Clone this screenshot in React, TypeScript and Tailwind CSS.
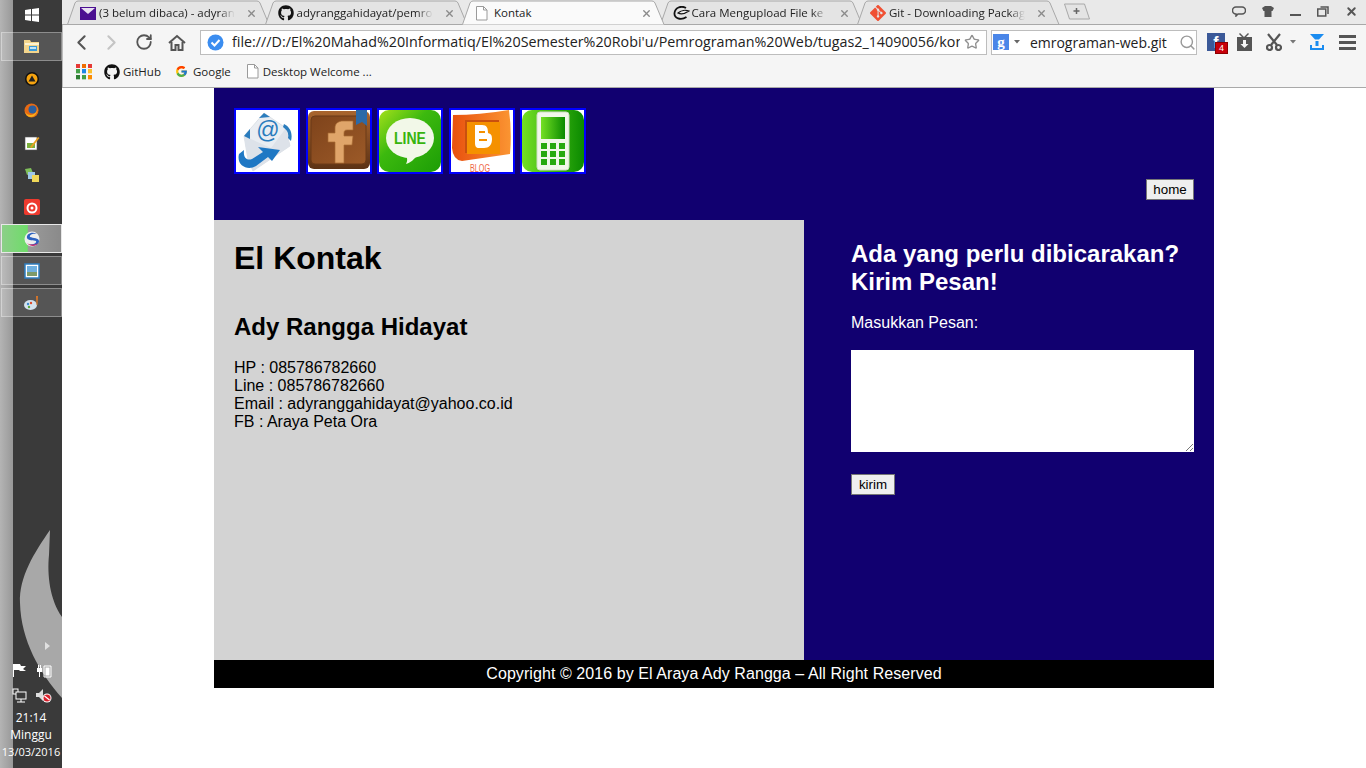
import { ChevronLeft, ChevronRight, RotateCw, Search, Star, X } from "lucide-react";
import { FaGithub } from "react-icons/fa";
import { FcGoogle } from "react-icons/fc";
import { SiGit } from "react-icons/si";
import type { ReactNode } from "react";

const uiFont = "font-['Open_Sans','Noto_Sans',sans-serif]";

function DocIcon() {
  return (
    <svg width="13" height="15" viewBox="0 0 13 15" fill="none" stroke="#9a9a9a" strokeWidth="1">
      <path d="M1.5.5h7l3.500 3.500v10h-10.500z" fill="#fff" />
      <path d="M8.500.5v3.500h3.500" />
    </svg>
  );
}

function MailIcon() {
  return (
    <svg width="16" height="13" viewBox="0 0 16 13">
      <rect width="16" height="13" fill="#4b0f91" />
      <path d="M1 1h14l-7 6z" fill="#e8e0f2" />
    </svg>
  );
}

function SwirlIcon() {
  return (
    <svg width="17" height="15" viewBox="0 0 17 15" fill="none" stroke="#111" strokeWidth="1.800">
      <path d="M13 2C8-1 2 2 1.500 7c-.5 5 6 8 12 4" />
      <path d="M5 7c3-3 8-3 11-2-3 2-7 4-11 2z" fill="#eee" strokeWidth="1.200" />
    </svg>
  );
}

function Tab({ icon, title, active }: { icon: ReactNode; title: string; active?: boolean }) {
  return (
    <div className={`relative h-[24px] w-[197.500px] shrink-0 ${active ? "z-10" : ""}`}>
      <svg className="absolute left-0 top-0" width="204" height="25" viewBox="0 0 204 25">
        <path
          d={`M.5 24.500 8 3Q9 1 11 1H190Q192 1 193 3L202 24.500${active ? "" : "Z"}`}
          fill={active ? "#fafafa" : "#e4e4e4"}
          stroke="#a8a8a8"
        />
      </svg>
      <div className="relative flex h-full items-center pl-[13px] pt-[2px]">
        <span className="flex w-[19px] shrink-0 items-center">{icon}</span>
        <span
          className={`w-[136px] overflow-hidden whitespace-nowrap text-[11.500px] text-[#222] ${uiFont} ${
            active ? "" : "[mask-image:linear-gradient(90deg,#000_88%,transparent)]"
          }`}
        >
          {title}
        </span>
        <X className="ml-[11px] shrink-0 text-[#8a8a8a]" size={11} strokeWidth={3} />
      </div>
    </div>
  );
}

function HomeIcon() {
  return (
    <svg width="18" height="17" viewBox="0 0 18 17" fill="none" stroke="#555" strokeWidth="2">
      <path d="M1 9l8-7 8 7" />
      <path d="M3.500 8v8h4v-5h3v5h4V8" />
    </svg>
  );
}

function AppsGrid() {
  const colors = ["#e53935", "#ef6c00", "#e53935", "#43a047", "#1e88e5", "#fbc02d", "#2e7d32", "#43a047", "#fb8c00"];
  return (
    <div className="grid h-[16px] w-[16px] grid-cols-3 gap-[1.500px]">
      {colors.map((c, i) => (
        <svg key={i} viewBox="0 0 4 4" className="h-full w-full">
          <rect width="4" height="4" fill={c} />
        </svg>
      ))}
    </div>
  );
}

function ChromeBar() {
  return (
    <div className="h-[88px] shrink-0 border-b border-[#a9a9a9] bg-[#f5f5f5]">
      {/* tab strip */}
      <div className="relative flex h-[25px] border-b border-[#a8a8a8] bg-[#e9e9e9] pl-[5px]">
        <Tab icon={<MailIcon />} title="(3 belum dibaca) - adyran" />
        <Tab icon={<FaGithub size={16} color="#111" />} title="adyranggahidayat/pemro" />
        <Tab icon={<DocIcon />} title="Kontak" active />
        <Tab icon={<SwirlIcon />} title="Cara Mengupload File ke" />
        <Tab icon={<SiGit size={16} color="#f05033" />} title="Git - Downloading Packag" />
        <svg className="ml-[6px] mt-[3px] shrink-0" width="32" height="18" viewBox="0 0 32 18" fill="#e4e4e4" stroke="#a8a8a8">
          <path d="M3.500 1h20l5 15h-20z" />
          <path d="M15.500 5v6M12.500 8h6" stroke="#666" strokeWidth="1.500" />
        </svg>
        <div className="ml-auto flex items-center gap-[16px] pb-[2px] pr-[8px] text-[#555]">
          <svg width="14" height="11" viewBox="0 0 14 11" fill="none" stroke="#555" strokeWidth="1.500">
            <path d="M4 1h6a3 3 0 0 1 0 7H6l-2 2V8a3.500 3.500 0 0 1 0-7z" />
          </svg>
          <svg width="12" height="11" viewBox="0 0 12 11" fill="#555">
            <path d="M0 2l3-2h6l3 2-1.500 3H9.500v6h-7V5H1.500z" />
          </svg>
          <svg width="11" height="11" viewBox="0 0 11 11" fill="#555">
            <rect y="8" width="11" height="2" />
          </svg>
          <svg width="12" height="11" viewBox="0 0 12 11" fill="none" stroke="#555" strokeWidth="1.500">
            <rect x=".75" y="3" width="8" height="7" />
            <path d="M3.500 1h7.500v7" />
          </svg>
          <X size={13} strokeWidth={3.500} />
        </div>
      </div>

      <div className="h-[62px] border-l border-[#bbbbbb]">
        {/* toolbar */}
        <div className="flex h-[33px] items-center pt-[1px]">
          <ChevronLeft className="ml-[5.500px] shrink-0 text-[#555]" size={25} strokeWidth={2} />
          <ChevronRight className="ml-[5px] shrink-0 text-[#c4c4c4]" size={25} strokeWidth={2} />
          <RotateCw className="ml-[11.500px] shrink-0 text-[#555]" size={18} strokeWidth={2.400} />
          <span className="ml-[15px] shrink-0">
            <HomeIcon />
          </span>
          <div className="ml-[14px] flex h-[25px] w-[787px] shrink-0 items-center border border-[#bdbdbd] bg-white pl-[6px]">
            <svg width="17" height="17" viewBox="0 0 17 17" className="shrink-0">
              <circle cx="8.500" cy="8.500" r="8" fill="#3b8df0" />
              <path d="M4.500 8.500l3 3 5-5.500" fill="none" stroke="#fff" strokeWidth="2" />
            </svg>
            <span className={`ml-[8px] w-[728px] overflow-hidden whitespace-nowrap text-[14.300px] text-[#222] ${uiFont}`}>
              file:///D:/El%20Mahad%20Informatiq/El%20Semester%20Robi'u/Pemrograman%20Web/tugas2_14090056/kontak.html
            </span>
            <Star className="ml-[4px] shrink-0 text-[#8f8f8f]" size={16} strokeWidth={2} />
          </div>
          <div className="ml-[4px] flex h-[25px] w-[206px] shrink-0 items-center border border-[#bdbdbd] bg-white pl-[1px]">
            <span className="flex h-[16px] w-[16px] items-center justify-center bg-[#4a86e8] font-['Liberation_Serif',serif] text-[15px] font-bold leading-none text-white">
              g
            </span>
            <svg className="ml-[5px]" width="6" height="4" viewBox="0 0 6 4" fill="#666">
              <path d="M0 0h6L3 3.500z" />
            </svg>
            <span className={`ml-[10px] w-[138px] overflow-hidden whitespace-nowrap text-[14px] text-[#222] ${uiFont}`}>
              emrograman-web.git
            </span>
            <Search className="ml-[12px] shrink-0 text-[#999]" size={17} strokeWidth={2} />
          </div>
          <div className="relative ml-[10px] h-[18px] w-[18px] shrink-0 bg-[#3b5998] text-center font-['Liberation_Sans',sans-serif] text-[16px] font-bold leading-[20px] text-white">
            f
            <span className="absolute left-[8px] top-[9px] h-[12px] w-[13px] border border-[#8d0000] bg-[#c8000b] text-[9px] font-normal leading-[11px]">
              4
            </span>
          </div>
          <svg className="ml-[12px] shrink-0" width="15" height="18" viewBox="0 0 15 18" fill="#555">
            <path d="M3 0l4 4 4-4 1 1-3 3h6v14H0V4h5L2 1z" />
            <path d="M6 7h3v4h2.500l-4 4-4-4H6z" fill="#f5f5f5" />
          </svg>
          <svg className="ml-[14px] shrink-0" width="16" height="18" viewBox="0 0 16 18" fill="none" stroke="#555" strokeWidth="2.200">
            <path d="M2 1l9 11M14 1L5 12" />
            <circle cx="3.500" cy="14.500" r="2.500" />
            <circle cx="12.500" cy="14.500" r="2.500" />
          </svg>
          <svg className="ml-[8px] shrink-0" width="6" height="4" viewBox="0 0 6 4" fill="#777">
            <path d="M0 0h6L3 3.500z" />
          </svg>
          <svg className="ml-[14px] shrink-0" width="14" height="16" viewBox="0 0 14 16" fill="#1a8cf0">
            <path d="M0 0h14L9 5.500H5z" />
            <rect x="5.500" y="7" width="3" height="5" />
            <rect y="14" width="14" height="2" />
            <rect y="11" width="2" height="4" />
            <rect x="12" y="11" width="2" height="4" />
          </svg>
          <div className="ml-[15px] flex w-[17px] shrink-0 flex-col gap-[3px]">
            <div className="h-[3px] bg-[#555]" />
            <div className="h-[3px] bg-[#555]" />
            <div className="h-[3px] bg-[#555]" />
          </div>
        </div>

        {/* bookmarks */}
        <div className={`flex h-[28px] items-center pb-[1px] pl-[13px] text-[11.500px] text-[#222] ${uiFont}`}>
          <AppsGrid />
          <span className="ml-[12px] flex items-center gap-[3px]">
            <FaGithub size={16} color="#111" />
            GitHub
          </span>
          <span className="ml-[14px] flex items-center gap-[5px]">
            <FcGoogle size={13} />
            Google
          </span>
          <span className="ml-[15px] flex items-center gap-[4px]">
            <DocIcon />
            Desktop Welcome ...
          </span>
        </div>
      </div>
    </div>
  );
}

function EmailLogo() {
  return (
    <svg viewBox="0 0 62 62" className="h-full w-full">
      <rect width="62" height="62" fill="#fff" />
      <path d="M8 26 28 3l22 15 4 18-37 25-5-11z" fill="#e9edf2" stroke="#c6ccd4" strokeWidth=".5" />
      <path d="M8 26l27 12 15-20 4 18-37 25-5-11z" fill="#dde2e9" />
      <path d="M14 19 8 26l6 3zM23 8l5-5 6 4zM48 14c6 3 9 9 7 17l-3-3c1-5-1-8-5-11z" fill="#2a7cbd" />
      <text x="32" y="28" fontSize="23" fill="#2a7cbd" textAnchor="middle" fontFamily="Liberation Sans">@</text>
      <path d="M3 44C0 56 12 61 20 56L32 47l4 4 8-11-22-3 5 5-11 7c-5 2-9-1-8-9z" fill="#1f78c4" />
    </svg>
  );
}

function FacebookLogo() {
  return (
    <svg viewBox="0 0 62 62" className="h-full w-full">
      <defs>
        <linearGradient id="woodFrame" x1="0" y1="0" x2="0" y2="1">
          <stop offset="0" stopColor="#a9652e" />
          <stop offset="1" stopColor="#5c3215" />
        </linearGradient>
        <linearGradient id="woodInner" x1="0" y1="0" x2="1" y2="1">
          <stop offset="0" stopColor="#7e431b" />
          <stop offset="1" stopColor="#9c5a28" />
        </linearGradient>
      </defs>
      <rect width="62" height="62" fill="#fff" />
      <rect x="0" y="1" width="62" height="58" rx="6" fill="url(#woodFrame)" />
      <rect x="3" y="6" width="55" height="48" rx="4" fill="url(#woodInner)" stroke="#6a3a18" />
      <path d="M27 53V32h-7v-9h7v-5c0-5 4-7 8-7h10v9h-6c-2 0-3 1-3 3v3h9l-1 9h-8v18z" fill="#e0a56a" stroke="#a86a32" strokeWidth=".7" />
      <path d="M48 0h11v16l-5-4-6 3z" fill="#2c6aa8" />
    </svg>
  );
}

function LineLogo() {
  return (
    <svg viewBox="0 0 62 62" className="h-full w-full">
      <defs>
        <linearGradient id="lineGrad" x1="0" y1="0" x2="1" y2="1">
          <stop offset="0" stopColor="#a4e01c" />
          <stop offset=".4" stopColor="#3cb90e" />
          <stop offset="1" stopColor="#1c9d06" />
        </linearGradient>
      </defs>
      <rect width="62" height="62" fill="#fff" />
      <rect width="62" height="62" rx="10" fill="url(#lineGrad)" />
      <ellipse cx="31" cy="28" rx="24" ry="20" fill="#f2f8e8" />
      <path d="M27 46c4 1 8 0 11-1-2 4-7 8-11 9 1-2 2-5 0-8z" fill="#f2f8e8" />
      <text x="31" y="34" fontSize="16.500" fontWeight="700" fill="#37b40c" textAnchor="middle" textLength="32" lengthAdjust="spacingAndGlyphs" fontFamily="Liberation Sans">LINE</text>
    </svg>
  );
}

function BloggerLogo() {
  return (
    <svg viewBox="0 0 62 62" className="h-full w-full">
      <defs>
        <linearGradient id="blogGrad" x1="0" y1="0" x2="1" y2="0">
          <stop offset="0" stopColor="#e8500e" />
          <stop offset="1" stopColor="#fb9532" />
        </linearGradient>
      </defs>
      <rect width="62" height="62" fill="#fff" />
      <path d="M2 5Q28 5 58 0q3 22 1 44L11 51Q2 50 1 38z" fill="url(#blogGrad)" />
      <rect x="14" y="10" width="34" height="33" fill="#c9500e" />
      <rect x="16" y="12" width="33" height="32" fill="#f59100" />
      <path d="M24 15h7c5 0 6 3 6 8 3 1 4 2 4 6 0 6-3 9-8 9h-5c-3 0-4-2-4-5z" fill="#fff" />
      <rect x="28" y="21" width="6" height="2" fill="#f59100" />
      <rect x="28" y="29" width="8" height="2" fill="#f59100" />
      <text x="29" y="61.500" fontSize="11.500" fill="#ee6644" textAnchor="middle" textLength="20" lengthAdjust="spacingAndGlyphs" fontFamily="Liberation Sans">BLOG</text>
    </svg>
  );
}

function PhoneLogo() {
  const keys = [33, 41, 49].flatMap((y) => [19, 28, 37].map((x) => ({ x, y })));
  return (
    <svg viewBox="0 0 62 62" className="h-full w-full">
      <defs>
        <linearGradient id="phoneGrad" x1="0" y1="0" x2="1" y2="0">
          <stop offset="0" stopColor="#74e024" />
          <stop offset="1" stopColor="#0a8a00" />
        </linearGradient>
      </defs>
      <rect width="62" height="62" fill="#fff" />
      <rect width="62" height="62" rx="10" fill="url(#phoneGrad)" />
      <rect x="15" y="2" width="32" height="58" rx="3" fill="#f1f7ea" stroke="#cfdcc4" />
      <rect x="19" y="7" width="24" height="22" fill="url(#phoneGrad)" />
      {keys.map((k) => (
        <rect key={`${k.x}-${k.y}`} x={k.x} y={k.y} width="6" height="6" fill="#27a90f" />
      ))}
    </svg>
  );
}

function SocialIcon({ children }: { children: ReactNode }) {
  return <div className="h-[66px] w-[66px] shrink-0 border-2 border-[#0000ff]">{children}</div>;
}

function FolderIcon() {
  return (
    <svg width="16" height="15" viewBox="0 0 16 15">
      <path d="M0 1h6l1 2h8v11H0z" fill="#f3d58c" />
      <path d="M1 4h14v2H1z" fill="#fdf3d0" />
      <rect x="5" y="7" width="8" height="5" fill="#3a9ad9" />
      <rect x="6" y="8" width="6" height="2" fill="#bfe4f8" />
    </svg>
  );
}

function Dock({ children, active, lit }: { children: ReactNode; active?: boolean; lit?: boolean }) {
  const base = "flex h-[29px] w-[61px] ml-[1px] items-center justify-center border";
  if (lit) {
    return (
      <div className={`${base} border-[#e8e8e8] bg-[linear-gradient(90deg,#8ccf88_0%,#6fdc6a_43%,#9a9a9a_44%,#8a8a8a_100%)]`}>{children}</div>
    );
  }
  return <div className={`${base} ${active ? "border-[#ffffff55] bg-[#ffffff24]" : "border-transparent"}`}>{children}</div>;
}

function Taskbar() {
  return (
    <aside className="relative flex h-full w-[62px] shrink-0 flex-col bg-[linear-gradient(90deg,#b4b4b4_0px,#989898_13px,#3a3a3a_13px,#3a3a3a_100%)] text-white">
      {/* crescent in the wallpaper */}
      <svg className="absolute left-0 top-[525px]" width="62" height="185" viewBox="0 0 62 185">
        <path d="M50 5C34 28 19 52 20 78c1 38 20 70 42 95V92C50 75 47 50 49 30z" fill="#a8a8a8" />
      </svg>

      <div className="relative flex h-[32px] items-center justify-center pb-[3px] pl-[1px]">
        <svg width="14" height="14" viewBox="0 0 14 14" fill="#fff">
          <path d="M0 2l6-1v5.500H0zM7 1l7-1v6.500H7zM0 7.500h6V13l-6-1zM7 7.500h7V14l-7-1z" />
        </svg>
      </div>
      <div className="relative flex flex-col gap-[3px]">
        <Dock active>
          <FolderIcon />
        </Dock>
        <Dock>
          <svg width="14" height="14" viewBox="0 0 14 14">
            <circle cx="7" cy="7" r="7" fill="#111" />
            <circle cx="7" cy="7" r="5.500" fill="#f6a410" />
            <path d="M7 3.500l3.500 6h-7z" fill="#222" />
          </svg>
        </Dock>
        <Dock>
          <svg width="15" height="15" viewBox="0 0 15 15">
            <circle cx="7.500" cy="7.500" r="7" fill="#e66a14" />
            <circle cx="8.500" cy="6.500" r="4" fill="#2b5f9e" />
            <path d="M1 9c2 3 6 4 9 2 2-1 3-3 4-6-1 6-4 9-7 9-3 0-5-2-6-5z" fill="#f8b21b" />
          </svg>
        </Dock>
        <Dock>
          <svg width="16" height="16" viewBox="0 0 16 16">
            <rect x="1" y="2" width="12" height="13" fill="#fff" stroke="#555" strokeWidth=".6" />
            <rect x="3" y="8" width="8" height="5" fill="#7bb03c" />
            <path d="M6 12l8-10 1.500 1-8 10z" fill="#e9a020" />
          </svg>
        </Dock>
        <Dock>
          <svg width="16" height="16" viewBox="0 0 16 16">
            <path d="M1 2l6-1 2 5-6 2z" fill="#7fbf5a" />
            <rect x="4" y="5" width="7" height="7" fill="#9fc8e8" />
            <rect x="8" y="8" width="7" height="7" fill="#f0d858" />
          </svg>
        </Dock>
        <Dock>
          <svg width="16" height="16" viewBox="0 0 16 16">
            <rect width="16" height="16" rx="2" fill="#ee3a2e" />
            <circle cx="8" cy="9" r="4.500" fill="none" stroke="#fff" strokeWidth="2" />
            <circle cx="8" cy="9" r="1.500" fill="#fff" />
          </svg>
        </Dock>
        <Dock lit>
          <svg width="16" height="16" viewBox="0 0 16 16">
            <circle cx="8" cy="8" r="7.500" fill="#eee" />
            <path d="M13 3C8 0 2 3 3 7c1 3 7 2 9 3 1 2-3 4-7 3 5 3 10 1 10-3 0-3-6-3-9-4-1-2 3-4 7-3z" fill="#2d62c0" />
            <path d="M3 12c3 4 9 4 11 0-3 2-8 2-11 0z" fill="#d02a6a" />
          </svg>
        </Dock>
        <Dock active>
          <svg width="16" height="16" viewBox="0 0 16 16">
            <rect x="1" y="1" width="14" height="14" fill="#fff" stroke="#2f7fc1" strokeWidth="1.500" />
            <rect x="3" y="3" width="10" height="6" fill="#6fb0e0" />
            <rect x="3" y="9" width="10" height="4" fill="#7d9a6a" />
          </svg>
        </Dock>
        <Dock active>
          <svg width="16" height="16" viewBox="0 0 16 16">
            <ellipse cx="6.500" cy="10" rx="6.500" ry="5" fill="#d4e2ee" />
            <circle cx="4" cy="9" r="1.200" fill="#3a8ad0" />
            <circle cx="7" cy="8" r="1.200" fill="#e04a2a" />
            <circle cx="5" cy="12" r="1.200" fill="#5aa83a" />
            <path d="M12 1h2l-.5 9h-1z" fill="#d9772a" />
          </svg>
        </Dock>
      </div>

      {/* system tray */}
      <div className="relative mt-auto flex flex-col items-center pb-[8px]">
        <svg className="ml-[33px]" width="5" height="8" viewBox="0 0 5 8" fill="#e0e0e0">
          <path d="M0 0l5 4-5 4z" />
        </svg>
        <div className="mt-[13px] flex gap-[9px] pl-[2px]">
          <svg width="15" height="15" viewBox="0 0 15 15" fill="#fff">
            <path d="M1 1h1v13H1zM2 1h6l1 2h5l-3 3 3 2H8L7 7H2z" />
          </svg>
          <svg width="16" height="15" viewBox="0 0 16 15" fill="#fff">
            <path d="M1 5h5v4H4v5H3V9H1zM2 2h1v3H2zM4 2h1v3H4z" />
            <path d="M8 3h7v11H8z" fill="none" stroke="#fff" />
            <rect x="9.500" y="4.500" width="4" height="8" />
          </svg>
        </div>
        <div className="mt-[10px] flex gap-[9px] pl-[2px]">
          <svg width="15" height="15" viewBox="0 0 15 15" fill="none" stroke="#fff">
            <rect x="1" y="1" width="5" height="5" />
            <rect x="4" y="4" width="10" height="7" fill="#3a3a3a" />
            <path d="M9 11v3M5 14h8" />
          </svg>
          <svg width="16" height="15" viewBox="0 0 16 15">
            <path d="M0 5h3l4-4v12l-4-4H0z" fill="#ddd" />
            <circle cx="11" cy="10" r="4.500" fill="#fff" />
            <circle cx="11" cy="10" r="3.500" fill="#d81e2a" />
            <path d="M8.500 8l5 4" stroke="#fff" strokeWidth="1.300" />
          </svg>
        </div>
        <div className={`mt-[6px] text-center text-[12px] leading-[17px] ${uiFont}`}>
          <div>21:14</div>
          <div>Minggu</div>
          <div className="whitespace-nowrap text-[11px]">13/03/2016</div>
        </div>
      </div>
    </aside>
  );
}

export default function App() {
  return (
    <div className="flex h-screen w-full overflow-hidden bg-white font-['Liberation_Sans',Arial,sans-serif]">
      <Taskbar />
      <main className="flex min-w-0 flex-1 flex-col">
        <ChromeBar />
        <div className="ml-[152px] w-[1000px] text-[16px] leading-[18px] text-black">
          <header className="h-[132px] bg-[#110070] px-[20px] pt-[20px]">
            <div className="flex gap-[5.600px]">
              <SocialIcon><EmailLogo /></SocialIcon>
              <SocialIcon><FacebookLogo /></SocialIcon>
              <SocialIcon><LineLogo /></SocialIcon>
              <SocialIcon><BloggerLogo /></SocialIcon>
              <SocialIcon><PhoneLogo /></SocialIcon>
            </div>
            <div className="mt-[5px] flex justify-end">
              <button className="h-[21px] w-[48px] border border-[#767676] bg-[#efefef] text-[13.333px] leading-none text-black">
                home
              </button>
            </div>
          </header>

          <div className="flex h-[440px]">
            <section className="w-[590px] bg-[#d3d3d3] px-[20px] pt-[20px]">
              <h1 className="text-[32px] font-bold leading-[37px]">El Kontak</h1>
              <h2 className="mt-[36px] text-[24px] font-bold leading-[28px]">Ady Rangga Hidayat</h2>
              <p className="mt-[18px]">
                HP : 085786782660
                <br />
                Line : 085786782660
                <br />
                Email : adyranggahidayat@yahoo.co.id
                <br />
                FB : Araya Peta Ora
              </p>
            </section>
            <section className="w-[410px] bg-[#110070] pl-[47px] pr-[20px] pt-[20px] text-white">
              <h2 className="text-[24px] font-bold leading-[28px]">
                Ada yang perlu dibicarakan?
                <br />
                Kirim Pesan!
              </h2>
              <p className="mt-[18px]">Masukkan Pesan:</p>
              <div className="relative mt-[18px] h-[102px] w-[343px] bg-white">
                <svg className="absolute bottom-[1px] right-[1px]" width="8" height="8" viewBox="0 0 8 8" stroke="#777">
                  <path d="M1 8l7-7M5 8l3-3" />
                </svg>
              </div>
              <button className="mt-[22px] block h-[21px] w-[44px] border border-[#767676] bg-[#efefef] text-[13.333px] leading-none text-black">
                kirim
              </button>
            </section>
          </div>

          <footer className="h-[28px] bg-black text-center leading-[27px] tracking-[0.07px] text-white">
            Copyright © 2016 by El Araya Ady Rangga – All Right Reserved
          </footer>
        </div>
      </main>
    </div>
  );
}
